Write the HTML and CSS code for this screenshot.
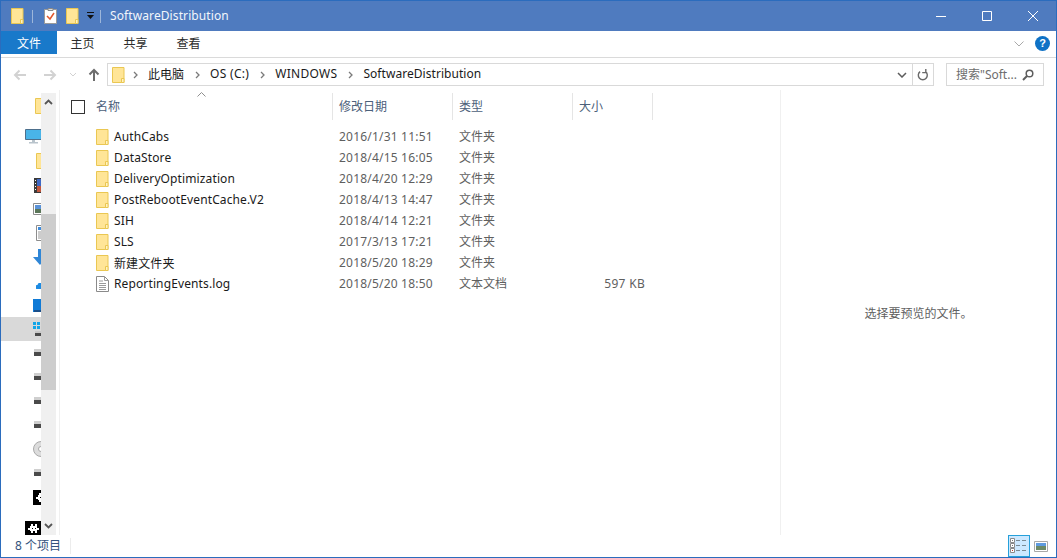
FILE: index.html
```html
<!DOCTYPE html>
<html lang="zh">
<head>
<meta charset="utf-8">
<title>SoftwareDistribution</title>
<link rel="stylesheet" href="styles.css">
</head>
<body>
<svg class="defs" width="0" height="0" aria-hidden="true">
  <symbol id="folder" viewBox="0 0 13 16">
    <path d="M.5.5h11.5v15H.5z" fill="#ffe597" stroke="#eac752"/>
    <path d="M9.5 15.5v-4h2.5v4z" fill="#fff3c4" stroke="#eac752"/>
  </symbol>
  <symbol id="filedoc" viewBox="0 0 13 16">
    <path d="M.5.5h8l4 4v11H.5z" fill="#fff" stroke="#8a8a8a"/>
    <path d="M8.5.5v4h4M3 5h4M3 7.5h7M3 9.5h7M3 11.5h7M3 13.5h7" fill="none" stroke="#9a9a9a"/>
  </symbol>
  <symbol id="drive" viewBox="0 0 8 8">
    <path d="M0 0h8v3H0z" fill="#cfcfcf"/>
    <path d="M0 3h8v4H0z" fill="#4a4a4a"/>
  </symbol>
  <symbol id="net" viewBox="0 0 16 15">
    <path d="M0 0h16v15H0z"/>
    <path d="M3 7h2V5h1V3h2v2h2V3h2v4h2v2h-2v3h-2v-2H8v2H6v-2H5V9H3z" fill="#fff"/>
    <path d="M7 7h1v1H7zM10 7h1v1h-1z"/>
  </symbol>
</svg>
<div class="window">
  <header class="titlebar">
    <svg class="qa-folder"><use href="#folder"/></svg>
    <span class="qa-sep"></span>
    <svg class="qa-props" viewBox="0 0 13 16">
      <path d="M.5 1.5h12v14H.5z" fill="#fff" stroke="#9a9a9a"/>
      <path d="M4 .5h5v2H4z" fill="#ddd" stroke="#888"/>
      <path d="M3 8l3 3 4-6" fill="none" stroke="#e2562b" stroke-width="1.5"/>
    </svg>
    <svg class="qa-folder qa-second"><use href="#folder"/></svg>
    <svg class="qa-drop" viewBox="0 0 8 8"><path d="M0 0h7v1H0zM0 3h7L3.500 7z" fill="#111"/></svg>
    <span class="qa-sep qa-sep-two"></span>
    <span class="title-text">SoftwareDistribution</span>
    <div class="win-controls">
      <svg class="win-btn" viewBox="0 0 46 30"><path d="M18 15.500h10" stroke="#fff"/></svg>
      <svg class="win-btn" viewBox="0 0 46 30"><path d="M18.500 10.500h9v9h-9z" fill="none" stroke="#fff"/></svg>
      <svg class="win-btn" viewBox="0 0 46 30"><path d="M18 10l10 10M28 10L18 20" stroke="#fff"/></svg>
    </div>
  </header>
  <nav class="ribbon">
    <span class="tab tab-file">文件</span>
    <span class="tab">主页</span>
    <span class="tab">共享</span>
    <span class="tab">查看</span>
    <svg class="ribbon-chevron" viewBox="0 0 10 6"><path d="M.5.500L5 5 9.500.500" fill="none" stroke="#a9a9a9"/></svg>
    <span class="help">?</span>
  </nav>
  <div class="addressrow">
    <div class="nav-btns">
      <svg class="nav-arrow" viewBox="0 0 14 12"><path d="M13 6H2M6.500 1.500L2 6l4.500 4.500" fill="none" stroke="#d2d2d2" stroke-width="2"/></svg>
      <svg class="nav-arrow" viewBox="0 0 14 12"><path d="M1 6h11M7.500 1.500L12 6l-4.500 4.500" fill="none" stroke="#d2d2d2" stroke-width="2"/></svg>
      <svg class="nav-drop" viewBox="0 0 8 5"><path d="M1 1l3 3 3-3" fill="none" stroke="#d2d2d2"/></svg>
      <svg class="nav-up" viewBox="0 0 12 14"><path d="M6 13V2M1.500 6.500L6 2l4.500 4.500" fill="none" stroke="#6d6d6d" stroke-width="2"/></svg>
    </div>
    <div class="address">
      <svg class="addr-folder"><use href="#folder"/></svg>
      <svg class="crumb-sep" viewBox="0 0 5 8"><path d="M1 1l3 3-3 3" fill="none" stroke="#7a7a7a" stroke-width="1.300"/></svg>
      <span class="crumb">此电脑</span>
      <svg class="crumb-sep" viewBox="0 0 5 8"><path d="M1 1l3 3-3 3" fill="none" stroke="#7a7a7a" stroke-width="1.300"/></svg>
      <span class="crumb crumb-wide">OS (C:)</span>
      <svg class="crumb-sep" viewBox="0 0 5 8"><path d="M1 1l3 3-3 3" fill="none" stroke="#7a7a7a" stroke-width="1.300"/></svg>
      <span class="crumb crumb-wide">WINDOWS</span>
      <svg class="crumb-sep" viewBox="0 0 5 8"><path d="M1 1l3 3-3 3" fill="none" stroke="#7a7a7a" stroke-width="1.300"/></svg>
      <span class="crumb crumb-long">SoftwareDistribution</span>
      <svg class="addr-drop" viewBox="0 0 10 6"><path d="M1 1l4 4 4-4" fill="none" stroke="#5c5c5c" stroke-width="1.500"/></svg>
      <span class="refresh">
        <svg viewBox="0 0 12 14" width="12" height="14"><path d="M8.500 3.600a4.500 4.500 0 1 1-5.400 0M8.800 1v3.600H5.200" fill="none" stroke="#6a6a6a" stroke-width="1.400"/></svg>
      </span>
    </div>
    <div class="search">
      <span class="search-text">搜索"Soft...</span>
      <svg viewBox="0 0 12 12" width="12" height="12"><circle cx="7.500" cy="4.500" r="3.300" fill="none" stroke="#5e5e5e" stroke-width="1.500"/><path d="M5 7l-4 4" stroke="#5e5e5e" stroke-width="2"/></svg>
    </div>
  </div>
  <main class="body">
    <aside class="sidebar">
      <div class="tree">
        <div class="node lv-a gap-after"><svg class="ic-folder"><use href="#folder"/></svg></div>
        <div class="node lv-root">
          <svg class="ic-pc" viewBox="0 0 17 16"><path d="M.5.500h16v10H.5z" fill="#49b4e8" stroke="#4d6f8c"/><path d="M7 11h3v2H7zM4 13h9v1.500H4z" fill="#b9c4cc"/></svg>
        </div>
        <div class="node lv-c"><svg class="ic-folder"><use href="#folder"/></svg></div>
        <div class="node lv-b">
          <svg class="ic-film" viewBox="0 0 14 15"><path d="M0 0h14v15H0z" fill="#3a3a3a"/><path d="M3 1h8v13H3z" fill="#3f68c4"/><path d="M3 8h8v6H3z" fill="#c0563d"/><path d="M1 2h1v1H1zM1 5h1v1H1zM1 8h1v1H1zM1 11h1v1H1z" fill="#fff"/></svg>
        </div>
        <div class="node lv-a0">
          <svg class="ic-small" viewBox="0 0 14 12"><path d="M.5.500h13v11H.5z" fill="#fff" stroke="#8d8d8d"/><path d="M2 2h10v4H2z" fill="#5a92d8"/><path d="M2 6h10v4H2z" fill="#5a7658"/></svg>
        </div>
        <div class="node lv-c">
          <svg class="ic-doc" viewBox="0 0 12 16"><path d="M.5.500h11v15H.5z" fill="#fff" stroke="#8d8d8d"/><path d="M2 2h8v3H2z" fill="#3d8bdc"/><path d="M2 7h8M2 9h8M2 11h8M2 13h8" stroke="#9a9a9a"/></svg>
        </div>
        <div class="node lv-a0">
          <svg class="ic-arrow" viewBox="0 0 14 16"><path d="M5 0h4v8h5l-7 8-7-8h5z" fill="#2f86d6"/></svg>
        </div>
        <div class="node lv-c cloud">
          <svg class="ic-cloud" viewBox="0 0 12 6"><path d="M1 6a2 2 0 0 1 .5-4A3 3 0 0 1 7 1h5v5z" fill="#1d8be2"/></svg>
        </div>
        <div class="node lv-a0">
          <svg class="ic-desk" viewBox="0 0 14 13"><path d="M0 0h14v13H0z" fill="#0f7ad6"/><path d="M1 11h13v2H1z" fill="#1a4f8a"/></svg>
        </div>
        <div class="node lv-a0 selected">
          <svg class="ic-win" viewBox="0 0 14 15"><path d="M0 0h3v3H0zM4 0h3v3H4zM0 4h3v3H0zM4 4h3v3H4z" fill="#12a5e8"/><path d="M2 11h12v3H2z" fill="#4a4a4a"/><path d="M2 9h12v2H2z" fill="#c8c8c8"/></svg>
        </div>
        <div class="node lv-d"><svg class="ic-drive"><use href="#drive"/></svg></div>
        <div class="node lv-d"><svg class="ic-drive"><use href="#drive"/></svg></div>
        <div class="node lv-d"><svg class="ic-drive"><use href="#drive"/></svg></div>
        <div class="node lv-d"><svg class="ic-drive"><use href="#drive"/></svg></div>
        <div class="node lv-a0">
          <svg class="ic-disc" viewBox="0 0 16 16"><circle cx="8" cy="8" r="7.500" fill="#dcdcdc" stroke="#a9a9a9"/><circle cx="8" cy="8" r="2.500" fill="#fff" stroke="#a9a9a9"/></svg>
        </div>
        <div class="node lv-d"><svg class="ic-drive"><use href="#drive"/></svg></div>
        <div class="node lv-a0 gap-after"><svg class="ic-net"><use href="#net"/></svg></div>
        <div class="node lv-root"><svg class="ic-net"><use href="#net"/></svg></div>
      </div>
      <div class="scrollbar">
        <svg class="scroll-arrow" viewBox="0 0 9 6"><path d="M1 5l3.500-3.500L8 5" fill="none" stroke="#555" stroke-width="1.800"/></svg>
        <div class="thumb-wrap"><div class="thumb"></div></div>
        <svg class="scroll-arrow" viewBox="0 0 9 6"><path d="M1 1l3.500 3.500L8 1" fill="none" stroke="#555" stroke-width="1.800"/></svg>
      </div>
    </aside>
    <section class="files">
      <div class="head">
        <span class="check"></span>
        <div class="col col-name">名称<svg class="sort" viewBox="0 0 9 5"><path d="M.5 4.500l4-4 4 4" fill="none" stroke="#8f8f8f"/></svg></div>
        <div class="col col-date">修改日期</div>
        <div class="col col-type">类型</div>
        <div class="col col-size">大小</div>
      </div>
      <div class="rows">
        <div class="row"><span class="name"><svg class="file-ic"><use href="#folder"/></svg>AuthCabs</span><span class="date">2016/1/31 11:51</span><span class="type">文件夹</span><span class="size"></span></div>
        <div class="row"><span class="name"><svg class="file-ic"><use href="#folder"/></svg>DataStore</span><span class="date">2018/4/15 16:05</span><span class="type">文件夹</span><span class="size"></span></div>
        <div class="row"><span class="name"><svg class="file-ic"><use href="#folder"/></svg>DeliveryOptimization</span><span class="date">2018/4/20 12:29</span><span class="type">文件夹</span><span class="size"></span></div>
        <div class="row"><span class="name"><svg class="file-ic"><use href="#folder"/></svg>PostRebootEventCache.V2</span><span class="date">2018/4/13 14:47</span><span class="type">文件夹</span><span class="size"></span></div>
        <div class="row"><span class="name"><svg class="file-ic"><use href="#folder"/></svg>SIH</span><span class="date">2018/4/14 12:21</span><span class="type">文件夹</span><span class="size"></span></div>
        <div class="row"><span class="name"><svg class="file-ic"><use href="#folder"/></svg>SLS</span><span class="date">2017/3/13 17:21</span><span class="type">文件夹</span><span class="size"></span></div>
        <div class="row"><span class="name"><svg class="file-ic"><use href="#folder"/></svg>新建文件夹</span><span class="date">2018/5/20 18:29</span><span class="type">文件夹</span><span class="size"></span></div>
        <div class="row"><span class="name"><svg class="file-ic"><use href="#filedoc"/></svg>ReportingEvents.log</span><span class="date">2018/5/20 18:50</span><span class="type">文本文档</span><span class="size">597 KB</span></div>
      </div>
    </section>
    <aside class="preview">选择要预览的文件。</aside>
  </main>
  <footer class="status">
    <span class="count">8 个项目</span>
    <div class="views">
      <span class="view-btn active">
        <svg viewBox="0 0 18 16" width="18" height="16"><path d="M.5.500h4v4h-4zM.5 5.500h4v4h-4zM.5 10.500h4v4h-4z" fill="#fff" stroke="#8a8a8a"/><path d="M2 2h1v1H2zM2 7h1v1H2z" fill="#777"/><path d="M2 12h1v1H2z" fill="#c0392b"/><path d="M6 2.500h4M12 2.500h4M6 7.500h4M12 7.500h4M6 12.500h4M12 12.500h4" stroke="#7a8a94"/></svg>
      </span>
      <svg class="view-thumb" viewBox="0 0 14 11" width="14" height="11"><path d="M.5.500h13v10H.5z" fill="#fff" stroke="#a9a9a9"/><path d="M2 2h10v3H2z" fill="#5f9be0"/><path d="M2 5h10v4H2z" fill="#6d8a68"/></svg>
    </div>
  </footer>
</div>
</body>
</html>
```

FILE: styles.css
```css
* { box-sizing: border-box; }
html, body { margin: 0; height: 100%; }
body {
  font-family: "Noto Sans", "Noto Sans CJK SC", sans-serif;
  font-size: 12px;
  color: #1a1a1a;
  background: #fff;
  overflow: hidden;
}
.defs { position: absolute; }
svg { display: block; flex: none; }

.window {
  width: 1057px;
  height: 558px;
  border: 1px solid #2b6cbd;
  display: flex;
  flex-direction: column;
  overflow: hidden;
}

/* title bar */
.titlebar {
  height: 30px;
  flex: none;
  background: #4f7bbf;
  display: flex;
  align-items: center;
  padding-left: 10px;
  color: #fff;
}
.qa-folder { width: 13px; height: 16px; }
.qa-sep { width: 1px; height: 13px; background: #9db6da; margin-left: 8px; }
.qa-props { width: 13px; height: 16px; margin-left: 11px; }
.qa-second { margin-left: 9px; }
.qa-drop { width: 8px; height: 8px; margin-left: 8px; }
.qa-sep-two { margin-left: 5px; }
.title-text { margin-left: 9px; font-size: 12px; line-height: 16px; letter-spacing: .1px; color: #f2f6fb; }
.win-controls { margin-left: auto; display: flex; }
.win-btn { width: 46px; height: 30px; }

/* ribbon tabs */
.ribbon {
  height: 27px;
  flex: none;
  display: flex;
  align-items: flex-start;
  border-bottom: 1px solid #dadada;
  padding-right: 3px;
}
.tab { width: 53px; height: 23px; padding-top: 1px; line-height: 23px; text-align: center; color: #2b2b2b; }
.tab-file { width: 56px; margin-right: -1px; background: #1979ca; color: #fff; }
.ribbon-chevron { width: 10px; height: 6px; margin: 10px 0 0 auto; }
.help {
  width: 15px;
  height: 15px;
  margin: 5px 3px 0 11px;
  border-radius: 50%;
  background: #0f72c6;
  color: #fff;
  font: bold 11px/15px "Liberation Sans", sans-serif;
  text-align: center;
}

/* address row */
.addressrow {
  height: 32px;
  flex: none;
  display: flex;
  align-items: flex-start;
  padding-top: 5px;
}
.nav-btns { width: 106px; height: 23px; display: flex; align-items: center; padding-left: 12px; }
.nav-arrow { width: 14px; height: 12px; margin-right: 16px; }
.nav-drop { width: 8px; height: 5px; margin-left: -4px; }
.nav-up { width: 12px; height: 14px; margin-left: 11px; }
.address {
  width: 827px;
  height: 23px;
  border: 1px solid #d9d9d9;
  display: flex;
  align-items: center;
  padding-left: 4px;
  color: #1a1a1a;
}
.addr-folder { width: 13px; height: 16px; margin-right: 8px; }
.crumb { padding-bottom: 2px; }
.crumb-wide { letter-spacing: .3px; }
.crumb-long { letter-spacing: .05px; }
.crumb-sep { width: 5px; height: 8px; margin: 0 10px 0 0; }
.crumb + .crumb-sep { margin-left: 11px; }
.addr-drop { width: 10px; height: 6px; margin-left: auto; margin-right: 5px; }
.refresh {
  width: 21px;
  height: 21px;
  border-left: 1px solid #d9d9d9;
  display: flex;
  align-items: center;
  justify-content: center;
}
.search {
  width: 98px;
  height: 23px;
  margin-left: 12px;
  border: 1px solid #d9d9d9;
  display: flex;
  align-items: center;
  justify-content: space-between;
  padding: 0 9px;
  color: #6d6d6d;
}
.search-text { padding-bottom: 2px; }

/* body */
.body { flex: 1; min-height: 0; display: flex; }
.sidebar { width: 59px; flex: none; display: flex; border-right: 1px solid #f0f0f0; padding-right: 3px; }
.tree { width: 40px; flex: none; padding-top: 4px; overflow: hidden; }
.node { height: 24px; display: flex; align-items: center; overflow: hidden; }
.gap-after { margin-bottom: 7px; }
.selected { background: #d9d9d9; }
.lv-root { padding-left: 24px; }
.lv-a0 { padding-left: 32px; }
.lv-a { padding-left: 34px; }
.lv-b { padding-left: 33px; }
.lv-c { padding-left: 35px; }
.lv-d { padding-left: 33px; }
.cloud { padding-top: 10px; }
.ic-folder { width: 13px; height: 16px; }
.ic-pc { width: 17px; height: 16px; }
.ic-film { width: 14px; height: 15px; }
.ic-small { width: 14px; height: 12px; }
.ic-doc { width: 12px; height: 16px; }
.ic-arrow { width: 14px; height: 16px; }
.ic-cloud { width: 12px; height: 6px; }
.ic-desk { width: 14px; height: 13px; }
.ic-win { width: 14px; height: 15px; }
.ic-drive { width: 8px; height: 8px; }
.ic-disc { width: 16px; height: 16px; }
.ic-net { width: 16px; height: 15px; }
.scrollbar {
  width: 15px;
  flex: none;
  margin-top: 3px;
  background: #f0f0f0;
  display: flex;
  flex-direction: column;
  align-items: center;
}
.scroll-arrow { width: 9px; height: 6px; margin: 6px 0; flex: none; }
.thumb-wrap { flex: 1; width: 100%; padding-top: 103px; padding-bottom: 127px; min-height: 0; }
.thumb { width: 100%; height: 100%; background: #cdcdcd; }

/* file list */
.files { width: 720px; flex: none; }
.head { height: 30px; display: flex; padding-top: 3px; position: relative; }
.check { width: 14px; height: 14px; border: 1px solid #333; margin: 7px 11px 0 11px; flex: none; }
.col {
  height: 27px;
  line-height: 27px;
  color: #4c607a;
  padding-left: 6px;
  border-right: 1px solid #e5e5e5;
  position: relative;
}
.col-name { width: 237px; padding-left: 0; }
.col-date, .col-type { width: 120px; }
.col-size { width: 80px; }
.sort { position: absolute; left: 101px; top: -1px; width: 9px; height: 5px; }
.rows { padding-top: 6px; }
.row { height: 21px; display: flex; align-items: center; }
.row > span { display: flex; align-items: center; white-space: nowrap; }
.name { width: 272px; padding-left: 36px; color: #1a1a1a; letter-spacing: .12px; }
.file-ic { width: 13px; height: 16px; margin-right: 5px; }
.date { width: 120px; padding-left: 7px; color: #5f5f5f; letter-spacing: .2px; }
.row > .type { width: 100px; padding: 0 0 2px 7px; color: #5f5f5f; }
.size { width: 93px; justify-content: flex-end; color: #5f5f5f; letter-spacing: .3px; }

/* preview pane */
.preview {
  flex: 1;
  border-left: 1px solid #f0f0f0;
  display: flex;
  align-items: center;
  justify-content: center;
  color: #5f5f5f;
}

/* status bar */
.status {
  height: 22px;
  flex: none;
  display: flex;
  align-items: center;
  justify-content: space-between;
  padding-left: 14px;
}
.count { color: #33527d; padding-right: 9px; line-height: 16px; border-right: 1px solid #ececec; }
.views { display: flex; align-items: center; padding-right: 8px; }
.view-btn {
  width: 22px;
  height: 22px;
  background: #cce8ff;
  border: 1px solid #26a0da;
  display: flex;
  align-items: center;
  justify-content: center;
}
.view-thumb { margin-left: 4px; }
```
